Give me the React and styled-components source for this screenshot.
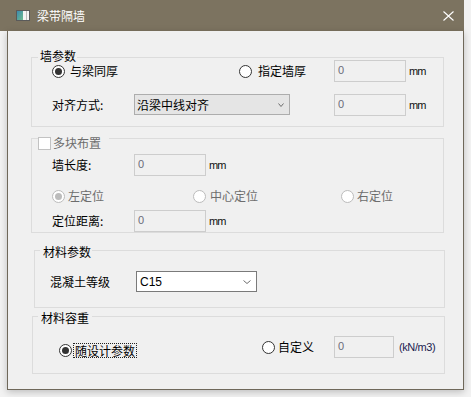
import React from 'react';
import styled, { createGlobalStyle } from 'styled-components';

const Global = createGlobalStyle`
  html, body { margin: 0; padding: 0; background: #f2f2f2; }
  body {
    width: 471px; height: 397px; overflow: hidden;
    font-family: "Noto Sans CJK SC", "Microsoft YaHei", sans-serif;
    font-size: 12px; color: #000;
  }
  * { box-sizing: border-box; }
`;

const Window = styled.div`
  width: 464px;
  display: flex;
  flex-direction: column;
`;

const TitleBar = styled.div`
  height: 31px;
  background: #7c7360;
  display: flex;
  align-items: center;
  padding: 0 10px 0 16px;
  color: #fff;
`;

const TitleText = styled.span`
  flex: 1;
  margin-left: 7px;
  font-size: 12px;
  line-height: 14px;
`;

const Body = styled.div`
  margin-left: 7px;
  width: 457px;
  height: 359px;
  background: #f0f0f0;
  border: 1px solid #6f685a;
  border-top: none;
  box-shadow: 0 2px 7px rgba(0, 0, 0, 0.22);
  display: flex;
  flex-direction: column;
`;

const Group = styled.div`
  margin-left: ${p => p.$x - 8}px;
  margin-top: ${p => p.$gap}px;
  width: ${p => p.$w}px;
  height: ${p => p.$h}px;
  border: 1px solid #dcdcdc;
  display: flex;
  flex-direction: column;
  flex: none;
`;

const Legend = styled.div`
  align-self: flex-start;
  display: flex;
  align-items: center;
  height: 14px;
  line-height: 14px;
  margin: ${p => p.$top}px 0 ${p => p.$bottom || 0}px ${p => p.$left}px;
  padding: 0 ${p => p.$pr}px 0 ${p => p.$pl}px;
  background: #f0f0f0;
  color: ${p => (p.$disabled ? '#6d6d6d' : '#000')};
  white-space: nowrap;
`;

const Row = styled.div`
  display: flex;
  align-items: center;
  height: ${p => p.$h || 22}px;
  margin-top: ${p => p.$mt || 0}px;
  padding-left: ${p => p.$pl}px;
  flex: none;
`;

const Cell = styled.div`
  width: ${p => p.$w}px;
  flex: none;
  display: flex;
  align-items: center;
  align-self: ${p => (p.$bottom ? 'flex-end' : 'center')};
  height: ${p => (p.$bottom ? '15px' : 'auto')};
`;

const Radio = styled.span`
  width: 13px;
  height: 13px;
  flex: none;
  border-radius: 50%;
  border: 1px solid ${p => (p.$disabled ? '#bcbcbc' : '#333')};
  background: #fff;
  display: flex;
  align-items: center;
  justify-content: center;
  &::after {
    content: '';
    display: ${p => (p.$checked ? 'block' : 'none')};
    width: 7px;
    height: 7px;
    border-radius: 50%;
    background: ${p => (p.$disabled ? '#bcbcbc' : '#333')};
  }
`;

const CheckBox = styled.span`
  width: 13px;
  height: 13px;
  flex: none;
  border: 1px solid #c2c2c2;
  background: #fff;
`;

const Label = styled.span`
  margin-left: ${p => p.$gap || 0}px;
  line-height: 14px;
  white-space: nowrap;
  color: ${p => (p.$disabled ? '#6d6d6d' : '#000')};
`;

const FocusLabel = styled.span`
  margin-left: 1px;
  padding: 0 1px;
  height: 15px;
  line-height: 13px;
  border: 1px dotted #222;
  white-space: nowrap;
`;

const Field = styled.div`
  width: ${p => p.$w}px;
  height: 22px;
  flex: none;
  border: 1px solid #cdcdcd;
  background: #f0f0f0;
  padding: 2px 3px;
  font-family: "Liberation Sans", Arial, sans-serif;
  font-size: 11px;
  line-height: 14px;
  color: #6b6b7a;
`;

const Unit = styled.span`
  margin-left: ${p => p.$gap || 3}px;
  font-family: "Liberation Sans", Arial, sans-serif;
  font-size: 11px;
  letter-spacing: ${p => p.$ls || -1}px;
  color: ${p => p.$color || '#111'};
  white-space: nowrap;
`;

const Select = styled.div`
  width: ${p => p.$w}px;
  height: ${p => p.$h || 21}px;
  flex: none;
  align-self: flex-start;
  margin-left: ${p => p.$ml || 0}px;
  border: 1px solid ${p => (p.$white ? '#7a7a7a' : '#adadad')};
  background: ${p => (p.$white ? '#fff' : '#e5e5e5')};
  display: flex;
  align-items: center;
  justify-content: space-between;
  padding: 0 ${p => p.$pr || 5}px 0 ${p => p.$pl || 2}px;
  line-height: 14px;
  font-family: ${p => (p.$latin ? '"Liberation Sans", Arial, sans-serif' : 'inherit')};
`;

const Spacer = styled.div`
  width: ${p => p.$w}px;
  flex: none;
`;

const Chevron = ({ w = 7, h = 4 }) => (
  <svg width={w} height={h} viewBox={`0 0 ${w} ${h}`}>
    <polyline points={`0.5,0.5 ${w / 2},${h - 0.5} ${w - 0.5},0.5`} fill="none" stroke="#6e6e6e" strokeWidth="1" />
  </svg>
);

const AppIcon = () => (
  <svg width="14" height="11" viewBox="0 0 14 11">
    <defs>
      <linearGradient id="ig" x1="0" y1="0" x2="1" y2="1">
        <stop offset="0" stopColor="#3d8bb0" />
        <stop offset="1" stopColor="#6dbb8e" />
      </linearGradient>
    </defs>
    <rect x="0.5" y="0.5" width="13" height="10" fill="#f4f4f4" stroke="#5a5a5a" />
    <rect x="1" y="1" width="6" height="9" fill="url(#ig)" />
    <line x1="10.5" y1="1" x2="10.5" y2="10" stroke="#bdbdbd" />
  </svg>
);

const CloseIcon = () => (
  <svg width="11" height="10" viewBox="0 0 11 10">
    <path d="M0.5 0.5 L10.5 9.5 M10.5 0.5 L0.5 9.5" stroke="#fff" strokeWidth="1.1" fill="none" />
  </svg>
);

export default function App() {
  return (
    <>
      <Global />
      <Window>
        <TitleBar>
          <AppIcon />
          <TitleText>梁带隔墙</TitleText>
          <CloseIcon />
        </TitleBar>
        <Body>
          <Group $x={31} $gap={26} $w={413} $h={70}>
            <Legend $top={-9} $bottom={-3} $left={6} $pl={2} $pr={1}>墙参数</Legend>
            <Row $pl={20}>
              <Cell $w={187}>
                <Radio $checked />
                <Label $gap={5}>与梁同厚</Label>
              </Cell>
              <Cell $w={95}>
                <Radio />
                <Label $gap={6}>指定墙厚</Label>
              </Cell>
              <Field $w={72}>0</Field>
              <Unit>mm</Unit>
            </Row>
            <Row $pl={20} $mt={12}>
              <Cell $w={82}>
                <Label>对齐方式:</Label>
              </Cell>
              <Select $w={156}>
                <span>沿梁中线对齐</span>
                <Chevron w={6} h={4} />
              </Select>
              <Spacer $w={44} />
              <Field $w={72}>0</Field>
              <Unit>mm</Unit>
            </Row>
          </Group>

          <Group $x={31} $gap={11} $w={413} $h={95}>
            <Legend $top={-3} $left={6} $pl={0} $pr={8} $disabled>
              <CheckBox />
              <Label $gap={2} $disabled>多块布置</Label>
            </Legend>
            <Row $pl={20} $mt={4}>
              <Cell $w={82}>
                <Label>墙长度:</Label>
              </Cell>
              <Field $w={72}>0</Field>
              <Unit>mm</Unit>
            </Row>
            <Row $pl={20} $mt={13} $h={14}>
              <Cell $w={141}>
                <Radio $checked $disabled />
                <Label $gap={3} $disabled>左定位</Label>
              </Cell>
              <Cell $w={148}>
                <Radio $disabled />
                <Label $gap={4} $disabled>中心定位</Label>
              </Cell>
              <Cell $w={80}>
                <Radio $disabled />
                <Label $gap={3} $disabled>右定位</Label>
              </Cell>
            </Row>
            <Row $pl={20} $mt={7}>
              <Cell $w={82}>
                <Label>定位距离:</Label>
              </Cell>
              <Field $w={72}>0</Field>
              <Unit>mm</Unit>
            </Row>
          </Group>

          <Group $x={34} $gap={17} $w={411} $h={58}>
            <Legend $top={-6} $left={5} $pl={3} $pr={1}>材料参数</Legend>
            <Row $pl={15} $mt={12} $h={21}>
              <Cell $w={86}>
                <Label>混凝土等级</Label>
              </Cell>
              <Select $w={121} $white $latin $pl={3} $pr={5}>
                <span>C15</span>
                <Chevron w={8} h={4} />
              </Select>
            </Row>
          </Group>

          <Group $x={32} $gap={8} $w={413} $h={58}>
            <Legend $top={-6} $left={5} $pl={3} $pr={3}>材料容重</Legend>
            <Row $pl={26} $mt={11}>
              <Cell $w={203} $bottom>
                <Radio $checked />
                <FocusLabel>随设计参数</FocusLabel>
              </Cell>
              <Cell $w={72}>
                <Radio />
                <Label $gap={3}>自定义</Label>
              </Cell>
              <Field $w={60}>0</Field>
              <Unit $gap={5} $ls={-0.4} $color="#1c2250">(kN/m3)</Unit>
            </Row>
          </Group>
        </Body>
      </Window>
    </>
  );
}
